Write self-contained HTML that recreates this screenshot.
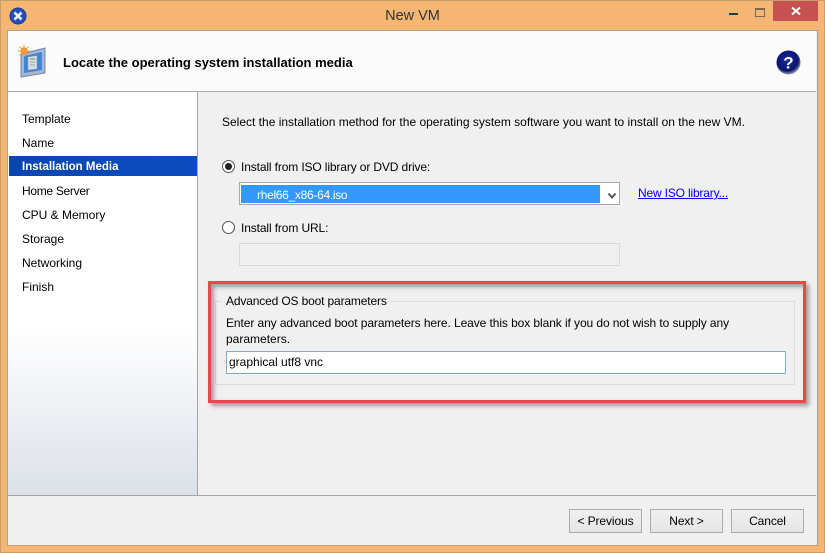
<!DOCTYPE html>
<html><head><meta charset="utf-8"><style>
html,body{margin:0;padding:0}
body{width:825px;height:553px;position:relative;overflow:hidden;background:#f4b672;font-family:"Liberation Sans",sans-serif;font-size:12px;color:#000}
.a{position:absolute}
.t{position:absolute;white-space:nowrap;line-height:16px}
.btn{position:absolute;box-sizing:border-box;height:24px;top:509px;border:1px solid #acacac;background:linear-gradient(#f0f0f0,#e5e5e5);text-align:center;line-height:22px;letter-spacing:-.1px}
</style></head><body>
<div class="a" style="left:0;top:0;width:823px;height:551px;border:1px solid #c99e6c"></div>
<div class="a" style="left:7px;top:30px;width:809px;height:514px;background:#f0f0f0;border:1px solid #a8a196;border-bottom-color:#c99e6c;border-left-color:#c99e6c"></div>
<svg class="a" style="left:9px;top:7px" width="18" height="18" viewBox="0 0 18 18"><circle cx="9" cy="9" r="8" fill="#2050c0"/><circle cx="9" cy="9" r="8" fill="none" stroke="#1a3a90"/><path d="M5.500 5.500L12.500 12.500M12.500 5.500L5.500 12.500" stroke="#fff" stroke-width="2.600"/></svg>
<div class="t" style="left:0;width:825px;text-align:center;top:7px;font-size:14.500px;line-height:18px;color:#333">New VM</div>
<div class="a" style="left:729px;top:13px;width:9px;height:2px;background:#2a3a3a"></div>
<div class="a" style="left:755px;top:8px;width:8px;height:6px;border:1px solid #7a6a55;border-top-width:2px"></div>
<div class="a" style="left:773px;top:1px;width:45px;height:20px;background:#c75050"></div>
<svg class="a" style="left:791px;top:6px" width="10" height="10" viewBox="0 0 10 10"><path d="M1 1.500L9 8.500M9 1.500L1 8.500" stroke="#fff" stroke-width="2"/></svg>
<div class="a" style="left:8px;top:31px;width:808px;height:60px;background:#fbfbfb;border-bottom:1px solid #a5a5a5"></div>
<svg class="a" style="left:17px;top:45px" width="30" height="33" viewBox="0 0 30 33"><path d="M4 9L28 3V28L4 32Z" fill="#a4b6d0" stroke="#7088a8"/><path d="M7 11L25 7V25L7 28Z" fill="#3f86d8"/><path d="M11 12L20 10.500V24L11 25Z" fill="#d8dde0" stroke="#8a9aa8" stroke-width=".5"/><path d="M13 14H18" stroke="#5a9a6a"/><path d="M13 17H18M13 20H18" stroke="#a0a8b0"/><circle cx="7" cy="6" r="3.600" fill="#f08a24"/><path d="M7 0V12M1 6H13M2.500 1.500L11.500 10.500M11.500 1.500L2.500 10.500" stroke="#f6a040"/></svg>
<div class="t" style="left:63px;top:55px;font-weight:bold;font-size:13px">Locate the operating system installation media</div>
<svg class="a" style="left:776px;top:50px" width="25" height="25" viewBox="0 0 25 25"><defs><radialGradient id="q" cx=".45" cy=".4" r=".6"><stop offset="0" stop-color="#1a2a9a"/><stop offset=".75" stop-color="#0a1470"/><stop offset="1" stop-color="#9a9fb2"/></radialGradient></defs><circle cx="12.500" cy="12.500" r="12" fill="url(#q)"/><text x="12.500" y="18.500" font-family="Liberation Sans" font-weight="bold" font-size="17" fill="#fff" text-anchor="middle">?</text></svg>
<div class="a" style="left:8px;top:92px;width:189px;height:403px;background:linear-gradient(#fff 0%,#fff 58%,#dce1e9 100%);border-right:1px solid #a5a5a5"></div>
<div class="a" style="left:8px;top:495px;width:808px;height:1px;background:#a5a5a5"></div>
<div class="a" style="left:9px;top:156px;width:188px;height:20px;background:linear-gradient(90deg,#0a46b0,#0a4cc0)"></div>
<div class="t" style="left:22px;top:111px">Template</div>
<div class="t" style="left:22px;top:135px">Name</div>
<div class="t" style="left:22px;top:159px;color:#fff;font-weight:bold;font-size:11.500px">Installation Media</div>
<div class="t" style="left:22px;top:183px;letter-spacing:-.3px">Home Server</div>
<div class="t" style="left:22px;top:207px">CPU &amp; Memory</div>
<div class="t" style="left:22px;top:231px">Storage</div>
<div class="t" style="left:22px;top:255px">Networking</div>
<div class="t" style="left:22px;top:279px">Finish</div>
<div class="t" style="left:222px;top:114px">Select the installation method for the operating system software you want to install on the new VM.</div>
<div class="a" style="left:222px;top:160px;width:11px;height:11px;border:1px solid #555;border-radius:50%;background:#fff"></div>
<div class="a" style="left:225px;top:163px;width:7px;height:7px;border-radius:50%;background:#222"></div>
<div class="t" style="left:241px;top:159px;letter-spacing:-.13px">Install from ISO library or DVD drive:</div>
<div class="a" style="left:239px;top:182px;width:379px;height:21px;border:1px solid #a8a8a8;background:#fff"></div>
<div class="a" style="left:241px;top:185px;width:359px;height:18px;background:#3399ff"></div>
<div class="t" style="left:257px;top:187px;color:#fff;letter-spacing:-.3px">rhel66_x86-64.iso</div>
<svg class="a" style="left:607px;top:192px" width="10" height="8" viewBox="0 0 10 8"><path d="M1.500 1.500L5 5.500L8.500 1.500" fill="none" stroke="#555" stroke-width="2"/></svg>
<div class="t" style="left:638px;top:185px;color:#0000ff;text-decoration:underline;letter-spacing:-.17px">New ISO library...</div>
<div class="a" style="left:222px;top:221px;width:11px;height:11px;border:1px solid #555;border-radius:50%;background:#fff"></div>
<div class="t" style="left:241px;top:220px;letter-spacing:-.12px">Install from URL:</div>
<div class="a" style="left:239px;top:243px;width:379px;height:21px;border:1px solid #d9d9d9;background:#f0f0f0"></div>
<div class="a" style="left:215px;top:301px;width:578px;height:82px;border:1px solid #dcdcdc"></div>
<div class="a" style="left:208px;top:281px;width:592px;height:116px;border:3px solid #e8484a;box-shadow:3px 3px 4px rgba(90,90,90,.55),inset 3px 3px 4px rgba(90,90,90,.55)"></div>
<div class="t" style="left:222px;top:293px;padding:0 4px;background:#f0f0f0;letter-spacing:-.15px">Advanced OS boot parameters</div>
<div class="t" style="left:226px;top:315px;letter-spacing:-.085px">Enter any advanced boot parameters here. Leave this box blank if you do not wish to supply any</div>
<div class="t" style="left:226px;top:331px">parameters.</div>
<div class="a" style="left:226px;top:351px;width:558px;height:21px;border:1px solid #7eaadc;background:#fff"></div>
<div class="t" style="left:229px;top:354px">graphical utf8 vnc</div>
<div class="btn" style="left:569px;width:73px">&lt; Previous</div>
<div class="btn" style="left:650px;width:73px">Next &gt;</div>
<div class="btn" style="left:731px;width:73px">Cancel</div>
</body></html>
